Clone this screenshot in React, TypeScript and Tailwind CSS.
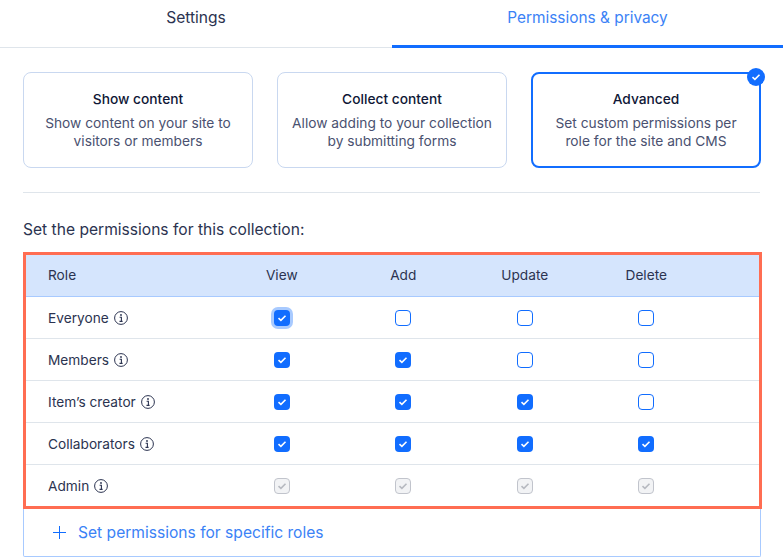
const cards = [
  { title: 'Show content', lines: ['Show content on your site to', 'visitors or members'] },
  { title: 'Collect content', lines: ['Allow adding to your collection', 'by submitting forms'] },
  { title: 'Advanced', lines: ['Set custom permissions per', 'role for the site and CMS'], selected: true },
]

const rows = [
  { role: 'Everyone', checks: [true, false, false, false], focused: true },
  { role: 'Members', checks: [true, true, false, false] },
  { role: 'Item’s creator', checks: [true, true, true, false] },
  { role: 'Collaborators', checks: [true, true, true, true] },
  { role: 'Admin', checks: [true, true, true, true], disabled: true },
]

const headers = ['View', 'Add', 'Update', 'Delete']

function CheckMark({ color }: { color: string }) {
  return (
    <svg width="10" height="8" viewBox="0 0 10 8" fill="none">
      <path d="M1.5 4.2 L3.9 6.3 L8.5 1.8" stroke={color} strokeWidth="1.6" />
    </svg>
  )
}

function Checkbox({ checked, disabled, focused }: { checked: boolean; disabled?: boolean; focused?: boolean }) {
  if (disabled) {
    return (
      <div className="w-4 h-4 rounded-[4px] border border-[#c1c4cc] bg-[#f2f3f5] flex items-center justify-center">
        <CheckMark color="#b6b9c0" />
      </div>
    )
  }
  if (checked) {
    return (
      <div
        className={
          focused
            ? 'w-4 h-4 rounded-[4px] bg-[#116dff] flex items-center justify-center shadow-[0_0_0_3px_#a8caff]'
            : 'w-4 h-4 rounded-[4px] bg-[#116dff] flex items-center justify-center'
        }
      >
        <CheckMark color="#ffffff" />
      </div>
    )
  }
  return <div className="w-4 h-4 rounded-[4px] border border-[#116dff] bg-white" />
}

function InfoIcon() {
  return (
    <svg width="14" height="14" viewBox="0 0 14 14" fill="none" className="shrink-0">
      <circle cx="7" cy="7" r="6.4" stroke="#2b3350" strokeWidth="1" />
      <circle cx="7" cy="4" r="0.9" fill="#2b3350" />
      <path d="M5.6 6.2 H7.4 V10.2 M5.5 10.4 H8.6" stroke="#2b3350" strokeWidth="1.1" />
    </svg>
  )
}

export default function App() {
  return (
    <div className="w-[783px] h-[557px] overflow-hidden bg-white text-[#162d3d] font-['Inter','Noto_Sans',sans-serif]">
      <div className="flex h-[48px] border-b border-[#dfe5eb]">
        <div className="w-[392px] flex items-center justify-center pb-[11px] text-[15.6px] text-[#2b3350]">
          Settings
        </div>
        <div className="w-[391px] h-[48px] flex items-center justify-center pb-[10px] border-b-[3px] border-[#116dff] text-[15.4px] text-[#3b82f6]">
          Permissions &amp; privacy
        </div>
      </div>

      <div className="flex gap-6 pl-[23px] pt-6">
        {cards.map((card) => (
          <div
            key={card.title}
            className={
              card.selected
                ? 'relative shrink-0 w-[230px] h-[96px] rounded-lg border-2 border-[#116dff] flex flex-col items-center pt-[16px]'
                : 'relative shrink-0 w-[230px] h-[96px] rounded-lg border border-[#c9d8f0] flex flex-col items-center pt-[17px]'
            }
          >
            <div className="text-[13.75px] leading-[18px] font-medium text-[#0f1736]">{card.title}</div>
            <div className="mt-[6px] text-[13.75px] leading-[18px] text-[#4a5170] text-center">
              {card.lines.map((line) => (
                <div key={line}>{line}</div>
              ))}
            </div>
            {card.selected && (
              <div className="absolute -top-[6px] -right-[6px] w-[18px] h-[18px] rounded-full bg-[#116dff] flex items-center justify-center">
                <CheckMark color="#ffffff" />
              </div>
            )}
          </div>
        ))}
      </div>

      <div className="mx-[23px] mt-6 h-px bg-[#dfe5eb]" />

      <div className="ml-[23px] mt-[27px] text-[15.6px] leading-[20px] text-[#2b3350]">
        Set the permissions for this collection:
      </div>

      <div className="relative ml-[23px] mt-[12px] w-[739px] border-[3px] border-[#ff6d52]">
        <div className="grid grid-cols-[195px_repeat(4,121.5px)] items-center h-[42px] bg-[#d5e5fd] border-b border-[#a8caff] text-[13.7px] text-[#2b3350]">
          <div className="pl-[22px] pb-[1px]">Role</div>
          {headers.map((h) => (
            <div key={h} className="text-center pb-[1px]">{h}</div>
          ))}
        </div>
        {rows.map((row, i) => (
          <div
            key={row.role}
            className={
              i < rows.length - 1
                ? 'grid grid-cols-[195px_repeat(4,121.5px)] items-center h-[42px] border-b border-[#dfe5eb] text-[13.7px] text-[#2b3350]'
                : 'grid grid-cols-[195px_repeat(4,121.5px)] items-center h-[41px] text-[13.7px] text-[#2b3350]'
            }
          >
            <div className="pl-[22px] pt-[2px] flex items-center gap-[5px]">
              {row.role}
              <InfoIcon />
            </div>
            {row.checks.map((checked, j) => (
              <div key={j} className="flex justify-center">
                <Checkbox checked={checked} disabled={row.disabled} focused={row.focused && j === 0} />
              </div>
            ))}
          </div>
        ))}
      </div>

      <div className="ml-[23px] w-[738px] h-[48px] border-x border-b border-[#a8caff] rounded-b-[2px] flex items-center pl-[29px] gap-[12px] text-[15.6px] text-[#3b82f6]">
        <svg width="13" height="13" viewBox="0 0 13 13" fill="none">
          <path d="M6.5 0 V13 M0 6.5 H13" stroke="#116dff" strokeWidth="1" />
        </svg>
        Set permissions for specific roles
      </div>
    </div>
  )
}
